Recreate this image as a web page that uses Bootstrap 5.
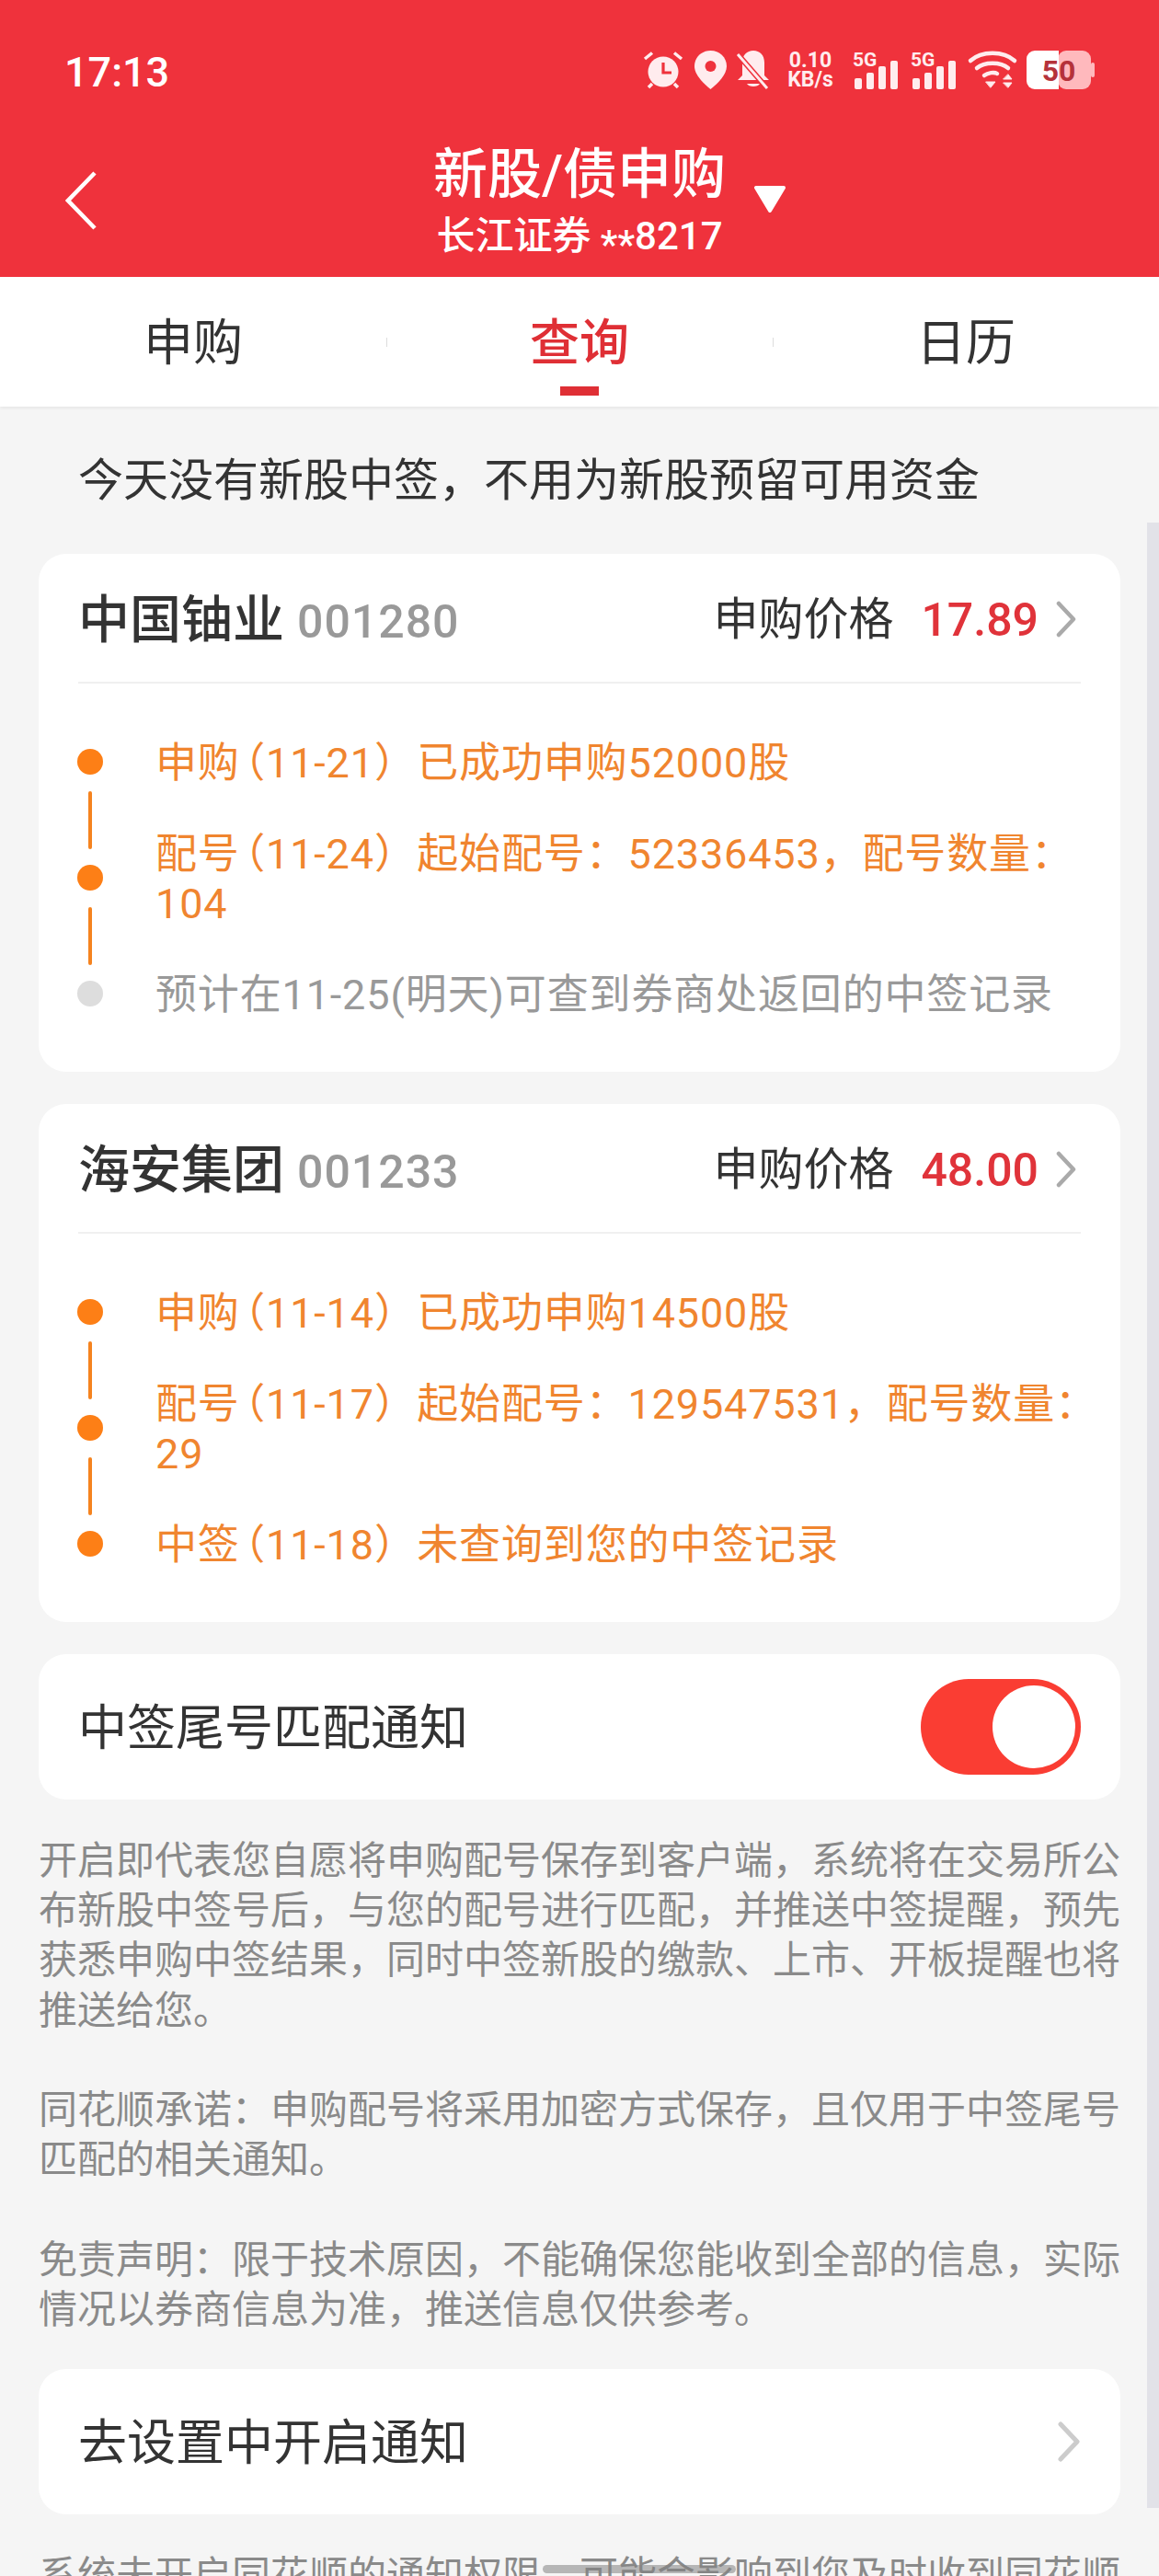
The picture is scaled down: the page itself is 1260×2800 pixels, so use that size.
<!doctype html>
<html lang="zh-CN">
  <head>
    <title>新股/债申购</title>
    <meta charset="utf-8">
    <meta name="viewport" content="width=device-width, initial-scale=1">
    <link href="https://cdn.jsdelivr.net/npm/bootstrap@5.3.3/dist/css/bootstrap.min.css" rel="stylesheet">
    <style>
        body {
            background-color: #f5f5f5;
            font-family: Roboto, "Noto Sans CJK SC", sans-serif;
            color: #333;
        }
        .phone-page { width: 1260px; height: 2800px; overflow: hidden; position: relative; }

        /* red header */
        .app-head { background-color: #ef323c; color: #fff; height: 301px; }
        .status-row { height: 120px; padding: 56px 70px 0 70px; }
        .status-time { font-size: 45px; line-height: 45px; font-weight: 500; }
        .status-icons { height: 42px; margin-top: -1px; }
        .status-icons svg { display: block; flex: none; overflow: visible; }
        .gap-11 { margin-left: 11px; }
        .gap-13 { margin-left: 13px; }
        .gap-14 { margin-left: 14px; }
        .gap-19 { margin-left: 19px; }
        .gap-21 { margin-left: 21px; }
        .net-speed { width: 50px; font-size: 23px; line-height: 21px; font-weight: 700; text-align: center; color: #ffecee; white-space: nowrap; }
        .title-row { display: grid; grid-template-columns: 1fr auto 1fr; padding-top: 35px; }
        .back-arrow { margin: 31px 0 0 71px; }
        .title-main { font-size: 59px; line-height: 70px; font-weight: 500; }
        .title-sub { font-size: 42px; line-height: 50px; margin-top: 7px; font-weight: 500; }
        .mask-stars { vertical-align: -9px; line-height: 1; }
        .title-caret { margin: 47px 0 0 30px; }

        /* tabs */
        .tab-bar { height: 141px; background: #fff; box-shadow: 0 2px 3px rgba(0,0,0,.06); position: relative; }
        .tab-item { width: 420px; font-size: 54px; line-height: 60px; padding-top: 43px; text-align: center; position: relative; }
        .tab-item + .tab-item::before { content: ""; position: absolute; left: 0; top: 66px; height: 10px; width: 1px; background: #ddd; }
        .tab-on { color: #df2f35; font-weight: 500; }
        .tab-on::after { content: ""; position: absolute; left: 189px; top: 119px; width: 42px; height: 10px; background: #df2f35; }

        .notice-line { height: 160px; padding: 2px 0 0 85px; font-size: 49px; }

        /* white blocks */
        .white-box { background: #fff; border-radius: 30px; margin: 0 42px; }
        .stock-box { padding: 0 43px 56px 43px; margin-bottom: 35px; }
        .stock-top { height: 141px; padding-top: 5px; border-bottom: 2px solid #f0f0f0; }
        .stock-name { font-size: 56px; font-weight: 500; }
        .stock-code { font-size: 50px; font-weight: 500; color: #999; margin-left: 14px; letter-spacing: 1px; }
        .price-label { font-size: 49px; }
        .price-value { font-size: 50px; font-weight: 500; color: #e0333a; margin-left: 30px; }
        .chev { margin: -2px 4px 0 18px; }
        .step-list { padding-top: 60px; display: flex; flex-direction: column; gap: 45px; }
        .step-row { display: flex; align-items: center; font-size: 45px; letter-spacing: .85px; line-height: 54px; color: #f0852f; }
        .step-text { margin-right: -30px; }
        .step-date { font-feature-settings: "halt"; padding: 0 23px 0 5px; }
        .step-mute { color: #999; }
        .step-dot { flex: none; width: 28px; height: 28px; margin: -5px 57px 0 -1px; border-radius: 50%; background: #fd7f16; position: relative; }
        .step-mute .step-dot { background: #ddd; }
        .step-row:not(:last-child) .step-dot::after { content: ""; position: absolute; left: 12px; top: 46px; width: 4px; height: 63px; border-radius: 2px; background: #f5831f; }

        .switch-box { height: 158px; padding: 0 43px; font-size: 53px; }
        .switch-label { padding-top: 5px; }
        .switch-track { width: 174px; height: 104px; border-radius: 52px; background: #fa3d33; padding: 7px 6px; display: flex; justify-content: flex-end; }
        .switch-knob { width: 90px; height: 90px; border-radius: 50%; background: #fff; }

        .fine-print { margin: 0 42px; padding: 40px 0 37px 0; font-size: 42px; line-height: 54.2px; color: #8a8a8a; text-align: justify; }
        .fine-print p { margin: 0 0 54.2px 0; }
        .fine-print p:last-child { margin: 0; }

        /* scrollbar and home indicator sit over the page */
        .scroll-thumb { position: absolute; right: 0; top: 568px; width: 13px; height: 2158px; background: #e2e2e8; }
        .home-bar { position: absolute; left: 590px; top: 2788px; width: 210px; height: 9px; border-radius: 5px; background: rgba(130,130,130,.55); }
    </style>
  </head>
  <body>
    <div class="phone-page">
      <div class="app-head">
        <div class="status-row d-flex justify-content-between">
          <div class="status-time">17:13</div>
          <div class="status-icons d-flex">
            <svg width="42" height="42" viewBox="0 0 42 42" fill="#ffecee">
              <circle cx="21" cy="23" r="16.5"/>
              <path d="M21 13v11h9" fill="none" stroke="#ef323c" stroke-width="3.2"/>
              <path d="M1 9 9 2.500M41 9 33 2.500M5 40 9 36M37 40 33 36" stroke="#ffecee" stroke-width="3.500" fill="none"/>
            </svg>
            <svg class="gap-13" width="35" height="42" viewBox="0 0 35 42" fill="#ffecee">
              <path d="M17.500 0C8 0 0 7 0 17c0 9 9 18 17.500 25C26 35 35 26 35 17 35 7 27 0 17.500 0Z"/>
              <circle cx="17.500" cy="17" r="6" fill="#ef323c"/>
            </svg>
            <svg class="gap-11" width="36" height="42" viewBox="0 0 36 42" fill="#ffecee">
              <path d="M18 0c7 0 12 5 12 13v14l5 5H1l5-5V13C6 5 11 0 18 0Z"/>
              <path d="M11 36h14c-2 4-12 4-14 0Z"/>
              <path d="M1 4 33 41" stroke="#ef323c" stroke-width="6"/>
              <path d="M1 4 33 41" stroke="#ffecee" stroke-width="3"/>
            </svg>
            <div class="net-speed gap-19"><div>0.10</div><div>KB/s</div></div>
            <svg class="gap-21" width="49" height="42" viewBox="0 0 49 42" fill="#ffecee">
              <text x="0" y="17" font-size="21" font-weight="700" font-family="Roboto">5G</text>
              <rect x="2" y="30" width="8" height="12" rx="2"/><rect x="15" y="24" width="8" height="18" rx="2"/><rect x="28" y="17" width="8" height="25" rx="2"/><rect x="41" y="11" width="8" height="31" rx="2"/>
            </svg>
            <svg class="gap-14" width="49" height="42" viewBox="0 0 49 42" fill="#ffecee">
              <text x="0" y="17" font-size="21" font-weight="700" font-family="Roboto">5G</text>
              <rect x="2" y="30" width="8" height="12" rx="2"/><rect x="15" y="24" width="8" height="18" rx="2"/><rect x="28" y="17" width="8" height="25" rx="2"/><rect x="41" y="11" width="8" height="31" rx="2"/>
            </svg>
            <svg class="gap-14" width="52" height="42" viewBox="0 0 52 42" fill="none" stroke="#ffecee" stroke-width="4.500" stroke-linecap="round" stroke-linejoin="round">
              <path d="M2 11C14 0 38 0 50 11"/>
              <path d="M9 19C17 12 35 12 43 19"/>
              <path d="M17 27C21 24 28 23 31 25"/>
              <path d="M19 34h10l-5 6Z" fill="#ffecee" stroke-width="1"/>
              <path d="M43 26l4 5h-9ZM38 35h9l-4 5Z" fill="#ffecee" stroke-width="1"/>
            </svg>
            <svg class="gap-11" width="74" height="42" viewBox="0 0 74 42">
              <rect x="34" y="0" width="36" height="42" rx="9" fill="#ffb9bd"/>
              <path d="M9 0h26v42H9a9 9 0 0 1-9-9V9a9 9 0 0 1 9-9Z" fill="#fff"/>
              <rect x="70" y="13" width="4" height="16" rx="2" fill="#ffb9bd"/>
              <text x="35" y="33" text-anchor="middle" font-size="32" font-weight="700" font-family="Roboto" fill="#b5323a">50</text>
            </svg>
          </div>
        </div>
        <div class="title-row">
          <svg class="back-arrow" width="34" height="64" viewBox="0 0 34 64" fill="none" stroke="#fff" stroke-width="4.500"><path d="M32 2 3 32 32 62"/></svg>
          <div class="text-center">
            <div class="title-main">新股/债申购</div>
            <div class="title-sub">长江证券 <span class="mask-stars">**</span>8217</div>
          </div>
          <svg class="title-caret" width="36" height="29" viewBox="0 0 36 29" fill="#fff" stroke="#fff" stroke-width="4" stroke-linejoin="round"><path d="M3 2h30L18 27Z"/></svg>
        </div>
      </div>

      <div class="tab-bar d-flex">
        <div class="tab-item">申购</div>
        <div class="tab-item tab-on">查询</div>
        <div class="tab-item">日历</div>
      </div>

      <div class="notice-line d-flex align-items-center">今天没有新股中签，不用为新股预留可用资金</div>

      <div class="white-box stock-box">
        <div class="stock-top d-flex justify-content-between align-items-center">
          <div><span class="stock-name">中国铀业</span><span class="stock-code">001280</span></div>
          <div class="d-flex align-items-center">
            <span class="price-label">申购价格</span><span class="price-value">17.89</span>
            <svg class="chev" width="24" height="40" viewBox="0 0 24 40" fill="none" stroke="#aaa" stroke-width="4.500" stroke-linecap="round" stroke-linejoin="round"><path d="M4 3 20 20 4 37"/></svg>
          </div>
        </div>
        <div class="step-list">
          <div class="step-row"><span class="step-dot"></span><span class="step-text">申购<span class="step-date">（11-21）</span>已成功申购52000股</span></div>
          <div class="step-row"><span class="step-dot"></span><span class="step-text">配号<span class="step-date">（11-24）</span>起始配号：52336453，配号数量：104</span></div>
          <div class="step-row step-mute"><span class="step-dot"></span><span class="step-text">预计在11-25(明天)可查到券商处返回的中签记录</span></div>
        </div>
      </div>

      <div class="white-box stock-box">
        <div class="stock-top d-flex justify-content-between align-items-center">
          <div><span class="stock-name">海安集团</span><span class="stock-code">001233</span></div>
          <div class="d-flex align-items-center">
            <span class="price-label">申购价格</span><span class="price-value">48.00</span>
            <svg class="chev" width="24" height="40" viewBox="0 0 24 40" fill="none" stroke="#aaa" stroke-width="4.500" stroke-linecap="round" stroke-linejoin="round"><path d="M4 3 20 20 4 37"/></svg>
          </div>
        </div>
        <div class="step-list">
          <div class="step-row"><span class="step-dot"></span><span class="step-text">申购<span class="step-date">（11-14）</span>已成功申购14500股</span></div>
          <div class="step-row"><span class="step-dot"></span><span class="step-text">配号<span class="step-date">（11-17）</span>起始配号：129547531，配号数量：29</span></div>
          <div class="step-row"><span class="step-dot"></span><span class="step-text">中签<span class="step-date">（11-18）</span>未查询到您的中签记录</span></div>
        </div>
      </div>

      <div class="white-box switch-box d-flex justify-content-between align-items-center">
        <span class="switch-label">中签尾号匹配通知</span>
        <div class="switch-track"><div class="switch-knob"></div></div>
      </div>

      <div class="fine-print">
        <p>开启即代表您自愿将申购配号保存到客户端，系统将在交易所公布新股中签号后，与您的配号进行匹配，并推送中签提醒，预先获悉申购中签结果，同时中签新股的缴款、上市、开板提醒也将推送给您。</p>
        <p>同花顺承诺：申购配号将采用加密方式保存，且仅用于中签尾号匹配的相关通知。</p>
        <p>免责声明：限于技术原因，不能确保您能收到全部的信息，实际情况以券商信息为准，推送信息仅供参考。</p>
      </div>

      <div class="white-box switch-box d-flex justify-content-between align-items-center">
        <span class="switch-label">去设置中开启通知</span>
        <svg width="26" height="44" viewBox="0 0 26 44" fill="none" stroke="#ccc" stroke-width="5" stroke-linecap="round" stroke-linejoin="round"><path d="M4 3 22 22 4 41"/></svg>
      </div>

      <div class="fine-print">
        <p>系统未开启同花顺的通知权限，可能会影响到您及时收到同花顺</p>
      </div>

      <div class="scroll-thumb"></div>
      <div class="home-bar"></div>
    </div>
    <script src="https://cdn.jsdelivr.net/npm/bootstrap@5.3.3/dist/js/bootstrap.bundle.min.js"></script>
  </body>
</html>
